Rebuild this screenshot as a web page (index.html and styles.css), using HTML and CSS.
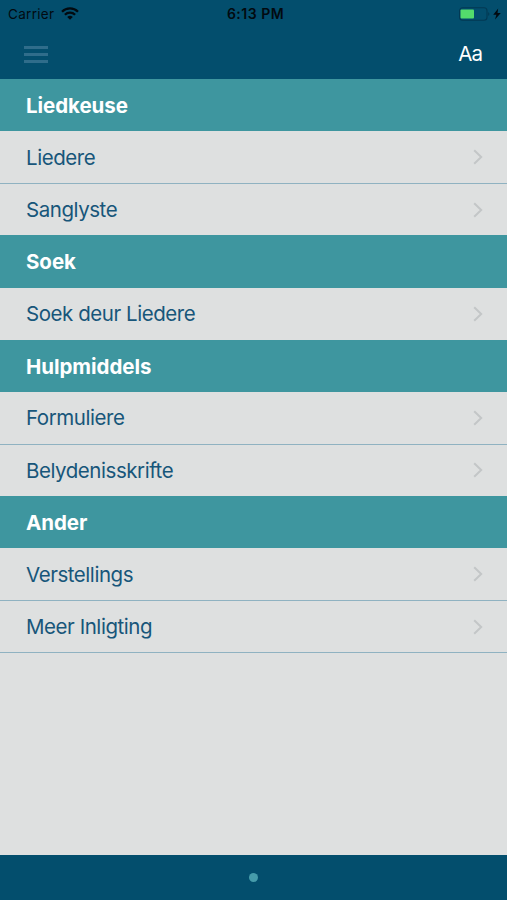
FILE: index.html
```html
<!DOCTYPE html>
<html lang="af">
<head>
    <meta charset="UTF-8">
    <meta name="viewport" content="width=device-width, initial-scale=1.0">
    <title>Liedere</title>
    <link rel="stylesheet" href="styles.css">
</head>
<body>
    <header>
        <div class="status-bar">
            <div class="carrier">
                <span>Carrier</span>
                <svg class="wifi" width="18" height="13" viewBox="0 0 18 13" fill="none" stroke="#020a10" stroke-width="2.3">
                    <path d="M1 4.7a11.4 11.4 0 0 1 16 0"/>
                    <path d="M3.9 7.8a7.2 7.2 0 0 1 10.2 0"/>
                    <path d="M9 12.8L6.2 10a4 4 0 0 1 5.6 0z" fill="#020a10" stroke="none"/>
                </svg>
            </div>
            <div class="time">6:13 PM</div>
            <div class="battery">
                <svg width="44" height="14" viewBox="0 0 44 14">
                    <rect x="0.6" y="0.8" width="27.4" height="12.4" rx="3" fill="none" stroke="#033953" stroke-width="1.1"/>
                    <rect x="1.5" y="2.5" width="13.5" height="9" rx="1" fill="#53dc6c"/>
                    <path d="M29.2 5q2.4 2 0 4z" fill="#033953"/>
                    <path d="M39.2 1.5l-5 6.3h3.2L36 12.5l5.8-6.5h-3.3z" fill="#020a10"/>
                </svg>
            </div>
        </div>
        <div class="nav-bar">
            <button class="menu-button" aria-label="Menu">
                <span></span>
                <span></span>
                <span></span>
            </button>
            <button class="font-button">Aa</button>
        </div>
    </header>
    <main>
        <section>
            <h2>Liedkeuse</h2>
            <ul>
                <li>Liedere<svg class="chevron" viewBox="0 0 10 16"><path d="M1.2 1.2L8.2 8l-7 6.8"/></svg></li>
                <li>Sanglyste<svg class="chevron" viewBox="0 0 10 16"><path d="M1.2 1.2L8.2 8l-7 6.8"/></svg></li>
            </ul>
        </section>
        <section>
            <h2>Soek</h2>
            <ul>
                <li>Soek deur Liedere<svg class="chevron" viewBox="0 0 10 16"><path d="M1.2 1.2L8.2 8l-7 6.8"/></svg></li>
            </ul>
        </section>
        <section>
            <h2>Hulpmiddels</h2>
            <ul>
                <li>Formuliere<svg class="chevron" viewBox="0 0 10 16"><path d="M1.2 1.2L8.2 8l-7 6.8"/></svg></li>
                <li>Belydenisskrifte<svg class="chevron" viewBox="0 0 10 16"><path d="M1.2 1.2L8.2 8l-7 6.8"/></svg></li>
            </ul>
        </section>
        <section>
            <h2>Ander</h2>
            <ul class="last-list">
                <li>Verstellings<svg class="chevron" viewBox="0 0 10 16"><path d="M1.2 1.2L8.2 8l-7 6.8"/></svg></li>
                <li>Meer Inligting<svg class="chevron" viewBox="0 0 10 16"><path d="M1.2 1.2L8.2 8l-7 6.8"/></svg></li>
            </ul>
        </section>
    </main>
    <footer>
        <span class="page-dot"></span>
    </footer>
</body>
</html>
```
FILE: styles.css
```css
body {
    display: flex;
    flex-direction: column;
    height: 900px;
    margin: 0;
    font-family: Inter, sans-serif;
    background-color: #dee0e0;
}

header {
    height: 79px;
    background-color: #034e6d;
}

/* Status bar */
.status-bar {
    display: grid;
    grid-template-columns: 1fr auto 1fr;
    align-items: center;
    height: 27px;
    padding: 0 4px 0 8px;
    font-size: 13.5px;
    color: #020a10;
}

.carrier {
    display: flex;
    align-items: center;
    gap: 7px;
    letter-spacing: 0.3px;
}

.time {
    font-size: 14px;
    font-weight: 600;
    letter-spacing: 0.5px;
}

.battery {
    display: flex;
    justify-content: flex-end;
}

/* Navigation bar */
.nav-bar {
    display: flex;
    justify-content: space-between;
    align-items: center;
    height: 52px;
    padding: 0 25px 0 24px;
}

button {
    padding: 0;
    border: none;
    background: none;
    font-family: inherit;
    cursor: pointer;
}

.menu-button {
    display: flex;
    flex-direction: column;
    gap: 4px;
    padding-top: 3px;
}

.menu-button span {
    width: 24px;
    height: 3px;
    background-color: #2f6d8b;
}

.font-button {
    color: white;
    font-size: 20.5px;
    letter-spacing: -0.9px;
}

/* Menu list */
main {
    flex: 1;
}

h2, li {
    box-sizing: border-box;
    height: 52.13px;
    margin: 0;
    padding: 0 24px 0 26px;
    font-size: 20.5px;
    line-height: 53px;
}

h2 {
    background-color: #3e969f;
    color: white;
    font-weight: 700;
    letter-spacing: -0.05px;
}

ul {
    list-style-type: none;
    margin: 0;
    padding: 0;
}

li {
    display: flex;
    justify-content: space-between;
    align-items: center;
    color: #17567a;
    letter-spacing: -0.45px;
}

li + li {
    border-top: 1px solid #8fb2c1;
}

.last-list {
    border-bottom: 1px solid #8fb2c1;
}

.chevron {
    width: 10px;
    height: 16px;
    fill: none;
    stroke: #c3c6c7;
    stroke-width: 2;
}

footer {
    display: flex;
    justify-content: center;
    align-items: center;
    height: 45px;
    background-color: #034e6d;
}

.page-dot {
    width: 9px;
    height: 9px;
    border-radius: 50%;
    background-color: #469cab;
}
```
